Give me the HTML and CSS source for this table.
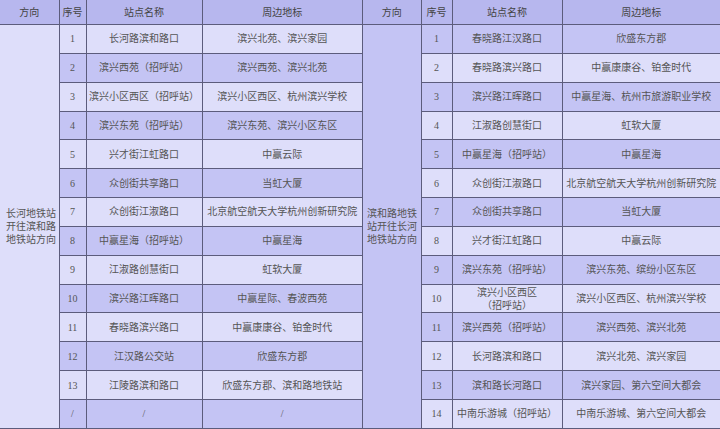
FILE: index.html
```html
<!DOCTYPE html>
<html lang="zh">
<head>
<meta charset="utf-8">
<link rel="stylesheet" href="styles.css">
</head>
<body>
<div class="wrap">
  <table class="tbl left">
    <colgroup><col class="c-dir-l"><col class="c-no-l"><col class="c-name-l"><col></colgroup>
    <thead>
      <tr><th>方向</th><th>序号</th><th>站点名称</th><th>周边地标</th></tr>
    </thead>
    <tbody>
      <tr><td class="dir" rowspan="14">长河地铁站<br>开往滨和路<br>地铁站方向</td><td>1</td><td>长河路滨和路口</td><td>滨兴北苑、滨兴家园</td></tr>
      <tr><td>2</td><td>滨兴西苑（招呼站）</td><td>滨兴西苑、滨兴北苑</td></tr>
      <tr><td>3</td><td>滨兴小区西区（招呼站）</td><td>滨兴小区西区、杭州滨兴学校</td></tr>
      <tr><td>4</td><td>滨兴东苑（招呼站）</td><td>滨兴东苑、滨兴小区东区</td></tr>
      <tr><td>5</td><td>兴才街江虹路口</td><td>中赢云际</td></tr>
      <tr><td>6</td><td>众创街共享路口</td><td>当虹大厦</td></tr>
      <tr><td>7</td><td>众创街江淑路口</td><td>北京航空航天大学杭州创新研究院</td></tr>
      <tr><td>8</td><td>中赢星海（招呼站）</td><td>中赢星海</td></tr>
      <tr><td>9</td><td>江淑路创慧街口</td><td>虹软大厦</td></tr>
      <tr><td>10</td><td>滨兴路江晖路口</td><td>中赢星际、春波西苑</td></tr>
      <tr><td>11</td><td>春晓路滨兴路口</td><td>中赢康康谷、铂金时代</td></tr>
      <tr><td>12</td><td>江汉路公交站</td><td>欣盛东方郡</td></tr>
      <tr><td>13</td><td>江陵路滨和路口</td><td>欣盛东方郡、滨和路地铁站</td></tr>
      <tr><td>/</td><td>/</td><td>/</td></tr>
    </tbody>
  </table>
  <table class="tbl right">
    <colgroup><col class="c-dir-r"><col class="c-no-r"><col class="c-name-r"><col></colgroup>
    <thead>
      <tr><th>方向</th><th>序号</th><th>站点名称</th><th>周边地标</th></tr>
    </thead>
    <tbody>
      <tr><td class="dir" rowspan="14">滨和路地铁<br>站开往长河<br>地铁站方向</td><td>1</td><td>春晓路江汉路口</td><td>欣盛东方郡</td></tr>
      <tr><td>2</td><td>春晓路滨兴路口</td><td>中赢康康谷、铂金时代</td></tr>
      <tr><td>3</td><td>滨兴路江晖路口</td><td>中赢星海、杭州市旅游职业学校</td></tr>
      <tr><td>4</td><td>江淑路创慧街口</td><td>虹软大厦</td></tr>
      <tr><td>5</td><td>中赢星海（招呼站）</td><td>中赢星海</td></tr>
      <tr><td>6</td><td>众创街江淑路口</td><td>北京航空航天大学杭州创新研究院</td></tr>
      <tr><td>7</td><td>众创街共享路口</td><td>当虹大厦</td></tr>
      <tr><td>8</td><td>兴才街江虹路口</td><td>中赢云际</td></tr>
      <tr><td>9</td><td>滨兴东苑（招呼站）</td><td>滨兴东苑、缤纷小区东区</td></tr>
      <tr><td>10</td><td>滨兴小区西区<br>（招呼站）</td><td>滨兴小区西区、杭州滨兴学校</td></tr>
      <tr><td>11</td><td>滨兴西苑（招呼站）</td><td>滨兴西苑、滨兴北苑</td></tr>
      <tr><td>12</td><td>长河路滨和路口</td><td>滨兴北苑、滨兴家园</td></tr>
      <tr><td>13</td><td>滨和路长河路口</td><td>滨兴家园、第六空间大都会</td></tr>
      <tr><td>14</td><td>中南乐游城（招呼站）</td><td>中南乐游城、第六空间大都会</td></tr>
    </tbody>
  </table>
</div>
</body>
</html>
```
FILE: styles.css
```css
html, body {
  margin: 0;
  padding: 0;
  background: #dedefa;
}
.wrap {
  display: flex;
  width: 720px;
  height: 429px;
  overflow: hidden;
}
.tbl {
  border-collapse: collapse;
  table-layout: fixed;
  height: 429px;
  font-family: "Liberation Serif", "Noto Sans CJK SC", serif;
  font-size: 10px;
  line-height: 13px;
  color: #555555;
  text-align: center;
  border-top: hidden;
}
.left {
  width: 363px;
  border-left: hidden;
}
.right {
  width: 357px;
  border-left: hidden;
  border-right: hidden;
}
.c-dir-l { width: 59px; }
.c-no-l { width: 27px; }
.c-name-l { width: 116px; }
.c-dir-r { width: 58px; }
.c-no-r { width: 31px; }
.c-name-r { width: 110px; }
.tbl th, .tbl td {
  border: 1px solid #5c5c7c;
  padding: 0 2px;
  white-space: nowrap;
  overflow: hidden;
}
.tbl th {
  height: 24px;
  font-weight: normal;
  background: #b7b7ee;
  color: #444444;
}
.tbl tbody tr {
  height: 28.7px;
}
.tbl td {
  background: #dedefa;
}
.left tbody tr:nth-child(even) td {
  background: #c4c4f4;
}
.right tbody tr:nth-child(odd) td {
  background: #c4c4f4;
}
.tbl td.dir {
  background: #dedefa;
  text-align: left;
  padding: 0 4px 0 6px;
  line-height: 13.3px;
}
.right td.dir {
  padding-left: 4px;
}
```
